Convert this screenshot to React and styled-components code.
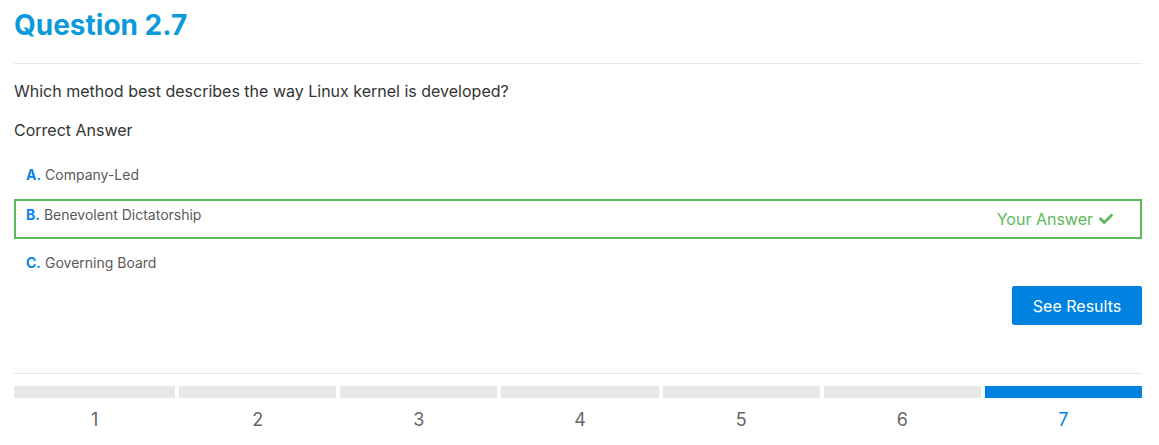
import React from 'react';
import styled, { createGlobalStyle } from 'styled-components';
import { FaCheck } from 'react-icons/fa';

const GlobalStyle = createGlobalStyle`
  body {
    margin: 0;
    background: #fff;
    font-family: Inter, "Noto Sans", sans-serif;
  }
`;

const StyledPage = styled.div`
  padding: 0 17px 0 14px;
  display: flex;
  flex-direction: column;
`;

const StyledTitle = styled.h1`
  margin: 0;
  padding-top: 8px;
  font-size: 28px;
  line-height: 34px;
  font-weight: 700;
  color: #0e9ad8;
`;

const StyledDivider = styled.hr`
  border: none;
  border-top: 1px solid #e6e6e6;
  margin: ${(p) => p.$top}px 0 0 0;
`;

const StyledQuestion = styled.p`
  margin: 15px 0 0 0;
  font-size: 16px;
  line-height: 24px;
  color: #333;
`;

const StyledSubhead = styled.div`
  margin-top: 15px;
  font-size: 16px;
  line-height: 24px;
  color: #333;
`;

const StyledOptions = styled.div`
  margin-top: 17px;
  display: flex;
  flex-direction: column;
  gap: 8px;
`;

const StyledOption = styled.div`
  display: flex;
  justify-content: space-between;
  align-items: flex-start;
  box-sizing: border-box;
  min-height: ${(p) => (p.$selected ? '40px' : 'auto')};
  padding: 4px 10px;
  border: 2px solid ${(p) => (p.$selected ? '#5cb85c' : 'transparent')};
  font-size: 14px;
  line-height: 20px;
  color: #5a5a5a;
`;

const StyledLetter = styled.b`
  color: #0a84e0;
  font-weight: 700;
`;

const StyledYourAnswer = styled.span`
  align-self: center;
  display: flex;
  align-items: center;
  gap: 6px;
  margin-right: 17px;
  font-size: 16px;
  line-height: 24px;
  color: #5cb85c;
`;

const StyledActions = styled.div`
  margin-top: 7px;
  display: flex;
  justify-content: flex-end;
`;

const StyledButton = styled.button`
  width: 130px;
  height: 39px;
  border: none;
  border-radius: 2px;
  background: #0083e0;
  color: #fff;
  font-family: inherit;
  font-size: 16px;
  cursor: pointer;
`;

const StyledSteps = styled.div`
  margin-top: 12px;
  display: grid;
  grid-template-columns: 161fr repeat(6, 157fr);
  column-gap: 4px;
`;

const StyledStep = styled.div`
  display: flex;
  flex-direction: column;
  align-items: center;
`;

const StyledBar = styled.div`
  width: 100%;
  height: 12px;
  background: ${(p) => (p.$active ? '#0083e0' : '#e8e8e8')};
`;

const StyledStepNumber = styled.div`
  margin-top: 10px;
  font-size: 18px;
  line-height: 24px;
  color: ${(p) => (p.$active ? '#0a84e0' : '#666')};
`;

const options = [
  { letter: 'A', text: 'Company-Led' },
  { letter: 'B', text: 'Benevolent Dictatorship', selected: true },
  { letter: 'C', text: 'Governing Board' },
];

const steps = [1, 2, 3, 4, 5, 6, 7];

const App = () => {
  const current = 7;

  return (
    <StyledPage>
      <GlobalStyle />
      <StyledTitle>Question 2.7</StyledTitle>
      <StyledDivider $top={21} />
      <StyledQuestion>
        Which method best describes the way Linux kernel is developed?
      </StyledQuestion>
      <StyledSubhead>Correct Answer</StyledSubhead>
      <StyledOptions>
        {options.map((o) => (
          <StyledOption key={o.letter} $selected={o.selected}>
            <span>
              <StyledLetter>{o.letter}.</StyledLetter> {o.text}
            </span>
            {o.selected && (
              <StyledYourAnswer>
                Your Answer <FaCheck size={14} />
              </StyledYourAnswer>
            )}
          </StyledOption>
        ))}
      </StyledOptions>
      <StyledActions>
        <StyledButton>See Results</StyledButton>
      </StyledActions>
      <StyledDivider $top={48} />
      <StyledSteps>
        {steps.map((n) => (
          <StyledStep key={n}>
            <StyledBar $active={n === current} />
            <StyledStepNumber $active={n === current}>{n}</StyledStepNumber>
          </StyledStep>
        ))}
      </StyledSteps>
    </StyledPage>
  );
};

export default App;
